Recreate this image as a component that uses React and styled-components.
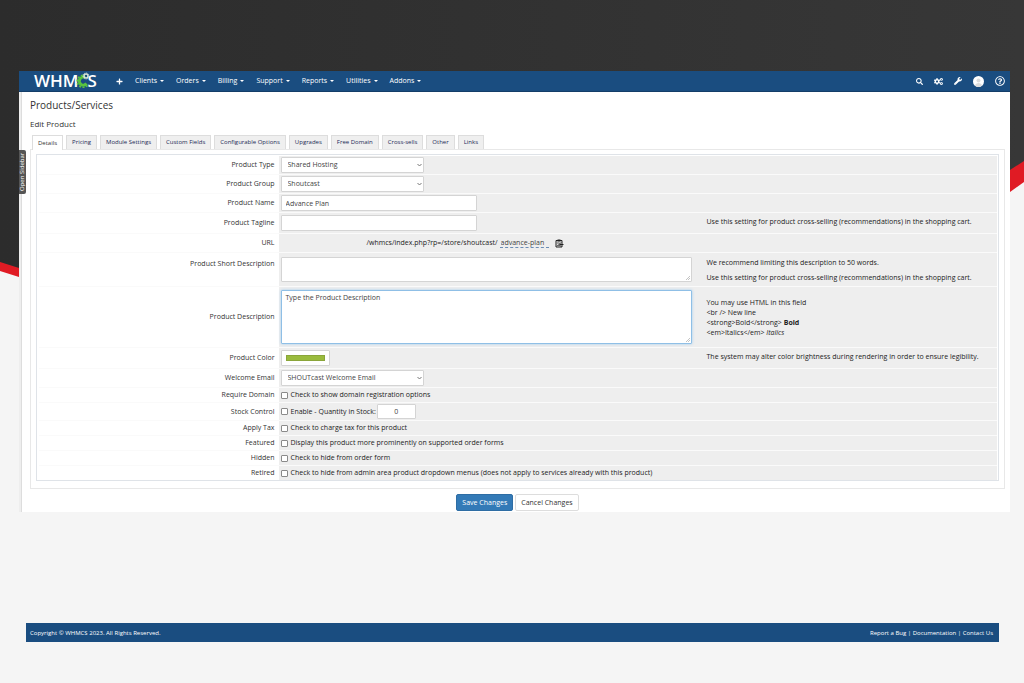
import React from 'react';
import styled, { createGlobalStyle, css } from 'styled-components';
import { FaPlus, FaSearch, FaCogs, FaWrench, FaRegQuestionCircle } from 'react-icons/fa';

const GlobalStyle = createGlobalStyle`
  * {
    box-sizing: border-box;
  }

  body {
    margin: 0;
    background: #f5f5f5;
    color: #333;
    font-family: "Open Sans", "Noto Sans", sans-serif;
    font-size: 7px;
    line-height: 10px;
  }

  button, input, select, textarea {
    font: inherit;
    color: inherit;
  }

  a {
    color: inherit;
    text-decoration: none;
  }
`;

const Page = styled.div`
  position: relative;
  min-height: 100vh;
  padding: 71px 14px 42px 19px;
`;

const Backdrop = styled.svg`
  position: absolute;
  top: 0;
  left: 0;
  width: 100%;
  height: 280px;
`;

const Window = styled.div`
  position: relative;
`;

const Header = styled.header`
  display: flex;
  align-items: center;
  height: 21px;
  padding: 0 5px 0 15px;
  background: #1a4d80;
  border-bottom: 1px solid #143d68;
  color: #fff;
`;

const Logo = styled.a`
  display: flex;
  align-items: center;
  width: 82px;
  font-size: 17px;
  font-weight: 600;
  line-height: 20px;

  svg {
    width: 14px;
    height: 16px;
    margin: -2px -2px 0 -3px;
  }
`;

const Nav = styled.nav`
  display: flex;
  align-items: center;
  gap: 12px;
  flex: 1;
`;

const NavLink = styled.a`
  display: flex;
  align-items: center;
  gap: 3px;

  &::after {
    content: "";
    border: 2px solid transparent;
    border-top-color: #fff;
    border-bottom: 0;
  }
`;

const IconLink = styled.a`
  display: flex;
  font-size: ${(props) => props.$size || 8}px;
`;

const HeaderIcons = styled.div`
  display: flex;
  align-items: center;
  gap: 11px;
`;

const Main = styled.main`
  padding: 7px 5px 1px 8px;
  margin-left: 3px;
  background: #fff;
  box-shadow: -1px 0 0 #ddd, -3px 0 0 #eee;
`;

const Title = styled.h1`
  margin: 0 0 7px;
  font-size: 10px;
  font-weight: 400;
  line-height: 12px;
`;

const Subtitle = styled.h2`
  margin: 0 0 5px;
  font-size: 8px;
  font-weight: 400;
  line-height: 12px;
`;

const SidebarToggle = styled.button`
  position: absolute;
  top: 79px;
  left: 0;
  width: 7px;
  height: 44px;
  padding: 0;
  border: 0;
  border-radius: 2px 0 0 2px;
  background: #555;
  color: #fff;
  font-size: 6px;
  line-height: 7px;
  writing-mode: vertical-rl;
  transform: rotate(180deg);
`;

const Tabs = styled.div`
  display: flex;
  gap: 3px;
  padding-left: 2px;
`;

const Tab = styled.button`
  padding: 1px 5px;
  border: 1px solid #ddd;
  border-bottom: 0;
  background: #efefef;
  color: #1c2a55;
  font-size: 6px;
  line-height: 11px;

  ${(props) =>
    props.$active &&
    css`
      background: #fff;
      color: #333;
      margin-bottom: -1px;
      position: relative;
    `}
`;

const TabPanel = styled.div`
  padding: 4px 5px 7px;
  border: 1px solid #e8e8e8;
`;

const FormTable = styled.div`
  padding: 1px 1px 0 2px;
  border: 1px solid #dfe3e8;
`;

const Row = styled.div`
  display: grid;
  grid-template-columns: 25% 1fr;
  border-bottom: 1px solid #fafafa;

  &:last-child {
    border-bottom: 0;
  }
`;

const RowLabel = styled.label`
  align-self: ${(props) => (props.$raised ? 'start' : 'center')};
  padding: ${(props) => (props.$raised ? '6px' : '0')} 4px 0 0;
  text-align: right;
`;

const Cell = styled.div`
  display: grid;
  grid-template-columns: ${(props) => (props.$split ? '411px 1fr' : '1fr')};
  gap: 15px;
  align-items: ${(props) => props.$align || 'center'};
  padding: ${(props) => props.$pad || 1}px 2px;
  background: #eee;
`;

const Hint = styled.div`
  padding-top: 2px;
  color: #222;

  p {
    margin: 0 0 5px;
  }

  p:last-child {
    margin: 0;
  }
`;

const field = css`
  border: 1px solid #d4d4d4;
  border-radius: 1px;
  background: #fff;
  color: #444;
  outline: 0;
`;

const TextInput = styled.input`
  ${field}
  display: block;
  width: 196px;
  height: 16px;
  padding: 0 4px;
`;

const QuantityInput = styled.input`
  ${field}
  width: 39px;
  height: 15px;
  padding: 0;
  text-align: center;
`;

const SelectWrap = styled.div`
  position: relative;
  width: 143px;

  svg {
    position: absolute;
    top: 6px;
    right: 2px;
    width: 5px;
    height: 4px;
  }
`;

const Select = styled.select`
  ${field}
  display: block;
  appearance: none;
  width: 100%;
  height: 16px;
  padding: 0 10px 0 6px;
`;

const AreaWrap = styled.div`
  position: relative;

  svg {
    position: absolute;
    right: 2px;
    bottom: 2px;
    width: 4px;
    height: 4px;
  }
`;

const TextArea = styled.textarea`
  ${field}
  display: block;
  width: 100%;
  height: ${(props) => props.$height}px;
  padding: 2px 4px;
  resize: none;

  ${(props) =>
    props.$focused &&
    css`
      border-color: #8fbfe6;
      box-shadow: 0 0 3px #9fcbee;
    `}
`;

const ColorInput = styled.input`
  ${field}
  display: block;
  appearance: none;
  width: 49px;
  height: 16px;
  padding: 4px;

  &::-webkit-color-swatch-wrapper {
    padding: 0;
  }

  &::-webkit-color-swatch {
    border: 1px solid #8aa53a;
    border-radius: 0;
  }
`;

const UrlField = styled.div`
  display: flex;
  align-items: center;
  gap: 2px;
  padding-left: 86px;
  color: #222;
`;

const SlugInput = styled.input`
  width: 49px;
  height: 10px;
  margin-right: 4px;
  padding: 0 1px;
  border: 0;
  border-bottom: 1px dashed #6b8db5;
  background: transparent;
  color: #444;
`;

const CopyButton = styled.button`
  display: flex;
  padding: 0;
  border: 0;
  background: none;

  svg {
    width: 9px;
    height: 9px;
  }
`;

const CheckLine = styled.div`
  display: flex;
  align-items: center;
  gap: 1px;
`;

const CheckLabel = styled.label`
  display: flex;
  align-items: center;
  gap: 3px;
  color: #222;
`;

const Checkbox = styled.input`
  appearance: none;
  width: 7px;
  height: 7px;
  margin: 0;
  border: 1px solid #8a8a8a;
  border-radius: 1px;
  background: #fff;
`;

const Actions = styled.div`
  display: flex;
  justify-content: center;
  gap: 2px;
  padding-top: 5px;
`;

const Button = styled.button`
  height: 17px;
  padding: 0 5px;
  border: 1px solid ${(props) => (props.$primary ? '#2e6da4' : '#ddd')};
  border-radius: 2px;
  background: ${(props) => (props.$primary ? '#337ab7' : '#fff')};
  color: ${(props) => (props.$primary ? '#fff' : '#333')};
`;

const Footer = styled.footer`
  display: flex;
  justify-content: space-between;
  margin: 111px 11px 0 7px;
  padding: 5px 6px 4px 4px;
  background: #1a4d80;
  color: #fff;
  font-size: 6px;
`;

const GearMark = () => (
  <svg viewBox="0 0 28 32" aria-hidden="true">
    <g fill="none" stroke="#58c43f">
      <path d="M21 23a8 8 0 1 1-3-12" strokeWidth="6" />
      <path d="M23 27a12 12 0 1 1-6-20" strokeWidth="3" strokeDasharray="4 3" />
    </g>
    <circle cx="20" cy="8" r="4" fill="none" stroke="#d9e4d6" strokeWidth="3" />
    <circle cx="20" cy="8" r="6" fill="none" stroke="#d9e4d6" strokeWidth="2" strokeDasharray="2 2" />
  </svg>
);

const Avatar = () => (
  <svg width="11" height="11" viewBox="0 0 22 22" aria-hidden="true">
    <circle cx="11" cy="11" r="11" fill="#fff" />
    <circle cx="11" cy="9" r="4" fill="#dcdcdc" />
    <path d="M4 19c1-7 13-7 14 0a11 11 0 0 1-14 0z" fill="#dcdcdc" />
  </svg>
);

const Chevron = () => (
  <svg viewBox="0 0 10 8" aria-hidden="true">
    <path d="M1 2l4 4 4-4" fill="none" stroke="#777" strokeWidth="2" />
  </svg>
);

const Grip = () => (
  <svg viewBox="0 0 8 8" aria-hidden="true">
    <path d="M0 8L8 0M4 8l4-4" stroke="#888" strokeWidth="1" />
  </svg>
);

const ClipboardIcon = () => (
  <svg viewBox="0 0 18 18" aria-hidden="true">
    <path d="M2 3h12v13H2z" fill="#ddd" stroke="#222" strokeWidth="2" />
    <path d="M5 1h6v4H5z" fill="#222" />
    <path d="M4 8h5M4 13h5" stroke="#444" strokeWidth="1.5" />
    <path d="M17 11H9M12 7l-4 4 4 4" fill="none" stroke="#222" strokeWidth="2" />
  </svg>
);

const navItems = ['Clients', 'Orders', 'Billing', 'Support', 'Reports', 'Utilities', 'Addons'];

const tabs = [
  'Details',
  'Pricing',
  'Module Settings',
  'Custom Fields',
  'Configurable Options',
  'Upgrades',
  'Free Domain',
  'Cross-sells',
  'Other',
  'Links',
];

const checks = [
  { id: 'tax', label: 'Apply Tax', text: 'Check to charge tax for this product' },
  { id: 'featured', label: 'Featured', text: 'Display this product more prominently on supported order forms' },
  { id: 'hidden', label: 'Hidden', text: 'Check to hide from order form' },
  {
    id: 'retired',
    label: 'Retired',
    text: 'Check to hide from admin area product dropdown menus (does not apply to services already with this product)',
  },
];

const crossSellHint = 'Use this setting for product cross-selling (recommendations) in the shopping cart.';

const SelectRow = ({ id, label, value }) => (
  <Row>
    <RowLabel htmlFor={id}>{label}</RowLabel>
    <Cell>
      <SelectWrap>
        <Select id={id} defaultValue={value}>
          <option>{value}</option>
        </Select>
        <Chevron />
      </SelectWrap>
    </Cell>
  </Row>
);

const CheckRow = ({ id, label, text }) => (
  <Row>
    <RowLabel htmlFor={id}>{label}</RowLabel>
    <Cell $pad={2}>
      <CheckLabel>
        <Checkbox id={id} type="checkbox" />
        {text}
      </CheckLabel>
    </Cell>
  </Row>
);

const App = () => {
  return (
    <Page>
      <GlobalStyle />
      <Backdrop viewBox="0 0 1024 280" preserveAspectRatio="none" aria-hidden="true">
        <defs>
          <linearGradient id="dark" x1="0" x2="1">
            <stop offset="0" stopColor="#2c2c2c" />
            <stop offset="1" stopColor="#373737" />
          </linearGradient>
        </defs>
        <path d="M0 0H1024V182L1010 192L900 271H19V277L0 271z" fill="#e01b24" />
        <path d="M0 0H1024V161L1010 170L900 240L19 268L0 262z" fill="url(#dark)" />
      </Backdrop>

      <Window>
        <Header>
          <Logo href="#home" aria-label="WHMCS">
            WHM
            <GearMark />S
          </Logo>
          <Nav>
            <IconLink href="#add" aria-label="Add" $size={7}>
              <FaPlus />
            </IconLink>
            {navItems.map((item) => (
              <NavLink key={item} href="#menu">
                {item}
              </NavLink>
            ))}
          </Nav>
          <HeaderIcons>
            <IconLink href="#search" aria-label="Search" $size={7}>
              <FaSearch />
            </IconLink>
            <IconLink href="#setup" aria-label="Configuration" $size={9}>
              <FaCogs />
            </IconLink>
            <IconLink href="#tools" aria-label="Tools" $size={8}>
              <FaWrench />
            </IconLink>
            <IconLink href="#account" aria-label="Account">
              <Avatar />
            </IconLink>
            <IconLink href="#help" aria-label="Help" $size={10}>
              <FaRegQuestionCircle />
            </IconLink>
          </HeaderIcons>
        </Header>

        <Main>
          <Title>Products/Services</Title>
          <Subtitle>Edit Product</Subtitle>
          <Tabs>
            {tabs.map((tab, index) => (
              <Tab key={tab} type="button" $active={index === 0}>
                {tab}
              </Tab>
            ))}
          </Tabs>
          <TabPanel>
            <FormTable>
              <SelectRow id="type" label="Product Type" value="Shared Hosting" />
              <SelectRow id="group" label="Product Group" value="Shoutcast" />
              <Row>
                <RowLabel htmlFor="name">Product Name</RowLabel>
                <Cell>
                  <TextInput id="name" type="text" defaultValue="Advance Plan" />
                </Cell>
              </Row>
              <Row>
                <RowLabel htmlFor="tagline">Product Tagline</RowLabel>
                <Cell $split $pad={2} $align="start">
                  <TextInput id="tagline" type="text" />
                  <Hint>{crossSellHint}</Hint>
                </Cell>
              </Row>
              <Row>
                <RowLabel htmlFor="slug">URL</RowLabel>
                <Cell $pad={4}>
                  <UrlField>
                    /whmcs/index.php?rp=/store/shoutcast/
                    <SlugInput id="slug" type="text" defaultValue="advance-plan" />
                    <CopyButton type="button" aria-label="Copy URL">
                      <ClipboardIcon />
                    </CopyButton>
                  </UrlField>
                </Cell>
              </Row>
              <Row>
                <RowLabel htmlFor="short" $raised>
                  Product Short Description
                </RowLabel>
                <Cell $split $pad={3}>
                  <AreaWrap>
                    <TextArea id="short" $height={25} />
                    <Grip />
                  </AreaWrap>
                  <Hint>
                    <p>We recommend limiting this description to 50 words.</p>
                    <p>{crossSellHint}</p>
                  </Hint>
                </Cell>
              </Row>
              <Row>
                <RowLabel htmlFor="description">Product Description</RowLabel>
                <Cell $split $pad={3}>
                  <AreaWrap>
                    <TextArea id="description" $height={54} $focused defaultValue="Type the Product Description" />
                    <Grip />
                  </AreaWrap>
                  <Hint>
                    You may use HTML in this field
                    <br />
                    {'<br /> New line'}
                    <br />
                    {'<strong>Bold</strong> '}
                    <strong>Bold</strong>
                    <br />
                    {'<em>Italics</em> '}
                    <em>Italics</em>
                  </Hint>
                </Cell>
              </Row>
              <Row>
                <RowLabel htmlFor="color">Product Color</RowLabel>
                <Cell $split $pad={2} $align="start">
                  <ColorInput id="color" type="color" defaultValue="#9abb3d" />
                  <Hint>The system may alter color brightness during rendering in order to ensure legibility.</Hint>
                </Cell>
              </Row>
              <SelectRow id="email" label="Welcome Email" value="SHOUTcast Welcome Email" />
              <CheckRow id="domain" label="Require Domain" text="Check to show domain registration options" />
              <Row>
                <RowLabel htmlFor="stock">Stock Control</RowLabel>
                <Cell>
                  <CheckLine>
                    <CheckLabel>
                      <Checkbox id="stock" type="checkbox" />
                      Enable - Quantity in Stock:
                    </CheckLabel>
                    <QuantityInput type="text" aria-label="Quantity in Stock" defaultValue="0" />
                  </CheckLine>
                </Cell>
              </Row>
              {checks.map((check) => (
                <CheckRow key={check.id} {...check} />
              ))}
            </FormTable>
          </TabPanel>
          <Actions>
            <Button type="submit" $primary>
              Save Changes
            </Button>
            <Button type="reset">Cancel Changes</Button>
          </Actions>
        </Main>
        <SidebarToggle type="button">Open Sidebar</SidebarToggle>
      </Window>

      <Window as={Footer}>
        <span>Copyright © WHMCS 2023. All Rights Reserved.</span>
        <span>
          <a href="#bug">Report a Bug</a> | <a href="#docs">Documentation</a> | <a href="#contact">Contact Us</a>
        </span>
      </Window>
    </Page>
  );
};

export default App;
